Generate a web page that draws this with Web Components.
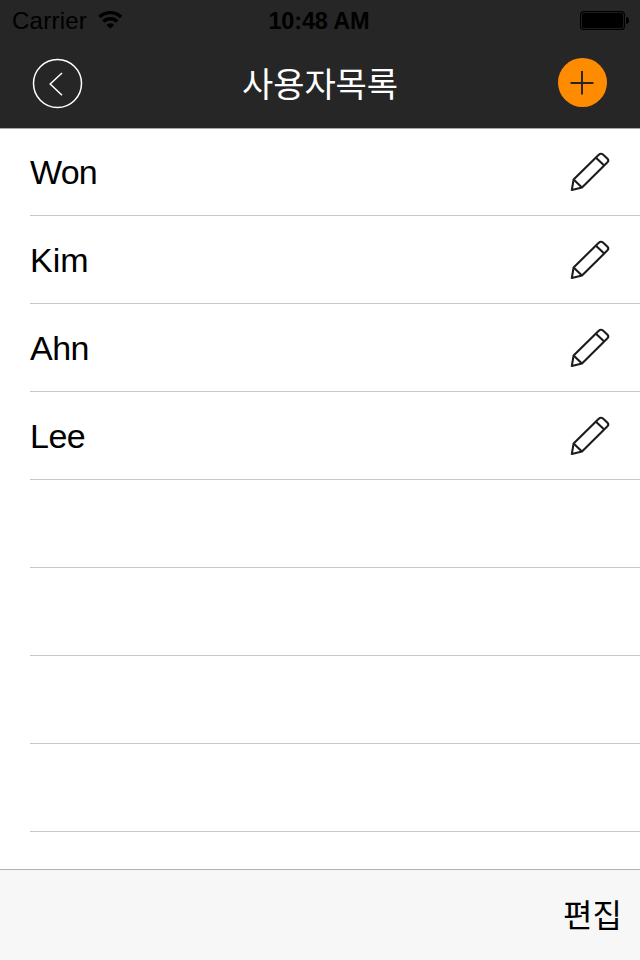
<!DOCTYPE html>
<html lang="ko">
<head>
<meta charset="utf-8">
<title>사용자목록</title>
<style>
html, body { margin: 0; height: 100%; background: #fff; }
body { font-family: "Liberation Sans", "Noto Sans CJK KR", sans-serif; color: #000; overflow: hidden; }
</style>
</head>
<body>
<user-list-app></user-list-app>
<script>
function define(name, html) {
  const template = document.createElement('template');
  template.innerHTML = html;
  customElements.define(name, class extends HTMLElement {
    constructor() {
      super();
      this.attachShadow({ mode: 'open' }).append(template.content.cloneNode(true));
    }
  });
}

define('status-bar', `
<style>
:host { display: grid; grid-template-columns: 1fr auto 1fr; align-items: center; height: 40px; padding: 0 11px 0 12px; box-sizing: border-box; font-size: 24px; line-height: 40px; }
.left { display: flex; align-items: center; gap: 11px; height: 40px; }
.carrier { letter-spacing: .25px; line-height: 38px; padding-top: 2px; }
.time { font-weight: 700; letter-spacing: -.15px; font-size: 23.5px; line-height: 38px; padding: 2px 3px 0 0; }
.battery { justify-self: end; }
svg { display: block; }
</style>
<div class="left"><span class="carrier">Carrier</span>
<svg width="25" height="18" viewBox="0 0 25 18"><g fill="none" stroke="#000" stroke-width="3.4"><path d="M1.5 6a15.6 15.6 0 0 1 21.6 0"/><path d="M5.4 10.6a9.8 9.8 0 0 1 13.8 0"/></g><path d="M8.3 14a5.6 5.6 0 0 1 8 0l-4 3.6z"/></svg></div>
<span class="time">10:48 AM</span>
<svg class="battery" width="49" height="19" viewBox="0 0 49 19"><rect x=".6" y=".6" width="43.8" height="17.8" rx="3" fill="none" stroke="#000" stroke-width="1.2"/><rect x="2" y="2" width="41" height="15" rx="1.8"/><path d="M46 6a3 3.4 0 0 1 0 7z"/></svg>`);

define('circle-button', `
<style>
:host { display: block; width: 50px; height: 50px; }
::slotted(svg) { display: block; overflow: visible; }
</style>
<slot></slot>`);

define('nav-bar', `
<style>
:host { display: grid; grid-template-columns: 1fr auto 1fr; align-items: center; height: 88px; padding: 0 32px; box-sizing: border-box; color: #fff; }
h1 { margin: 0; padding-bottom: 2px; font: 400 34px/50px "Noto Sans CJK KR", sans-serif; letter-spacing: -.1px; }
::slotted([slot=right]) { justify-self: end; }
</style>
<slot name="left"></slot><h1><slot></slot></h1><slot name="right"></slot>`);

define('user-row', `
<style>
:host { display: flex; align-items: center; justify-content: space-between; height: 88px; margin-left: 30px; padding-right: 30px; box-sizing: border-box; border-bottom: 1px solid #c8c7cc; font-size: 34px; line-height: 40px; }
:host([empty]) svg { display: none; }
svg { display: block; }
span { letter-spacing: var(--tracking, 0); }
</style>
<span><slot></slot></span>
<svg width="40" height="40" viewBox="0 0 40 40" fill="none" stroke="#1c1c1c" stroke-width="2.1" stroke-linejoin="round"><path d="M1.8 38 3.6 27.6 28.5 2.9Q31 .6 33.5 2.9L37.5 6.8Q39.2 8.7 37.2 10.6L12 35.6Z"/><path d="M3.6 27.6 12 35.6M26 5.8 34.2 13.6"/></svg>`);

define('tool-bar', `
<style>
:host { display: flex; align-items: center; justify-content: flex-end; height: 91px; padding: 0 18px 4px; box-sizing: border-box; border-top: 1px solid #b2b2b2; background: #f7f7f7; font: 400 32px/48px "Noto Sans CJK KR", sans-serif; }
</style>
<span><slot></slot></span>`);

define('user-list-app', `
<style>
:host { display: flex; flex-direction: column; width: 640px; height: 960px; }
header { background: #262626; height: 128px; flex: none; border-bottom: 1px solid #a8a8a8; }
main { flex: 1; min-height: 0; overflow: hidden; }
user-row:first-child { height: 87px; }
tool-bar { flex: none; }
.tight { --tracking: -.8px; }
.snug { --tracking: -.5px; }
</style>
<header>
<status-bar></status-bar>
<nav-bar>
<circle-button slot="left"><svg width="50" height="50" viewBox="0 0 50 50" fill="none" stroke="#fff" stroke-width="1.5"><circle cx="25.5" cy="24.5" r="24"/><path d="M30 14 18.2 25 30 36.2"/></svg></circle-button>
사용자목록
<circle-button slot="right"><svg width="50" height="50" viewBox="0 0 50 50"><circle cx="24.5" cy="23.5" r="24.5" fill="#ff8c00"/><path d="M24 12v23.5M12.5 24H35.5" stroke="#262626" stroke-width="2"/></svg></circle-button>
</nav-bar>
</header>
<main>
<user-row class="tight">Won</user-row><user-row>Kim</user-row><user-row class="snug">Ahn</user-row><user-row class="snug">Lee</user-row>
<user-row empty></user-row><user-row empty></user-row><user-row empty></user-row><user-row empty></user-row>
</main>
<tool-bar>편집</tool-bar>`);
</script>
</body>
</html>
